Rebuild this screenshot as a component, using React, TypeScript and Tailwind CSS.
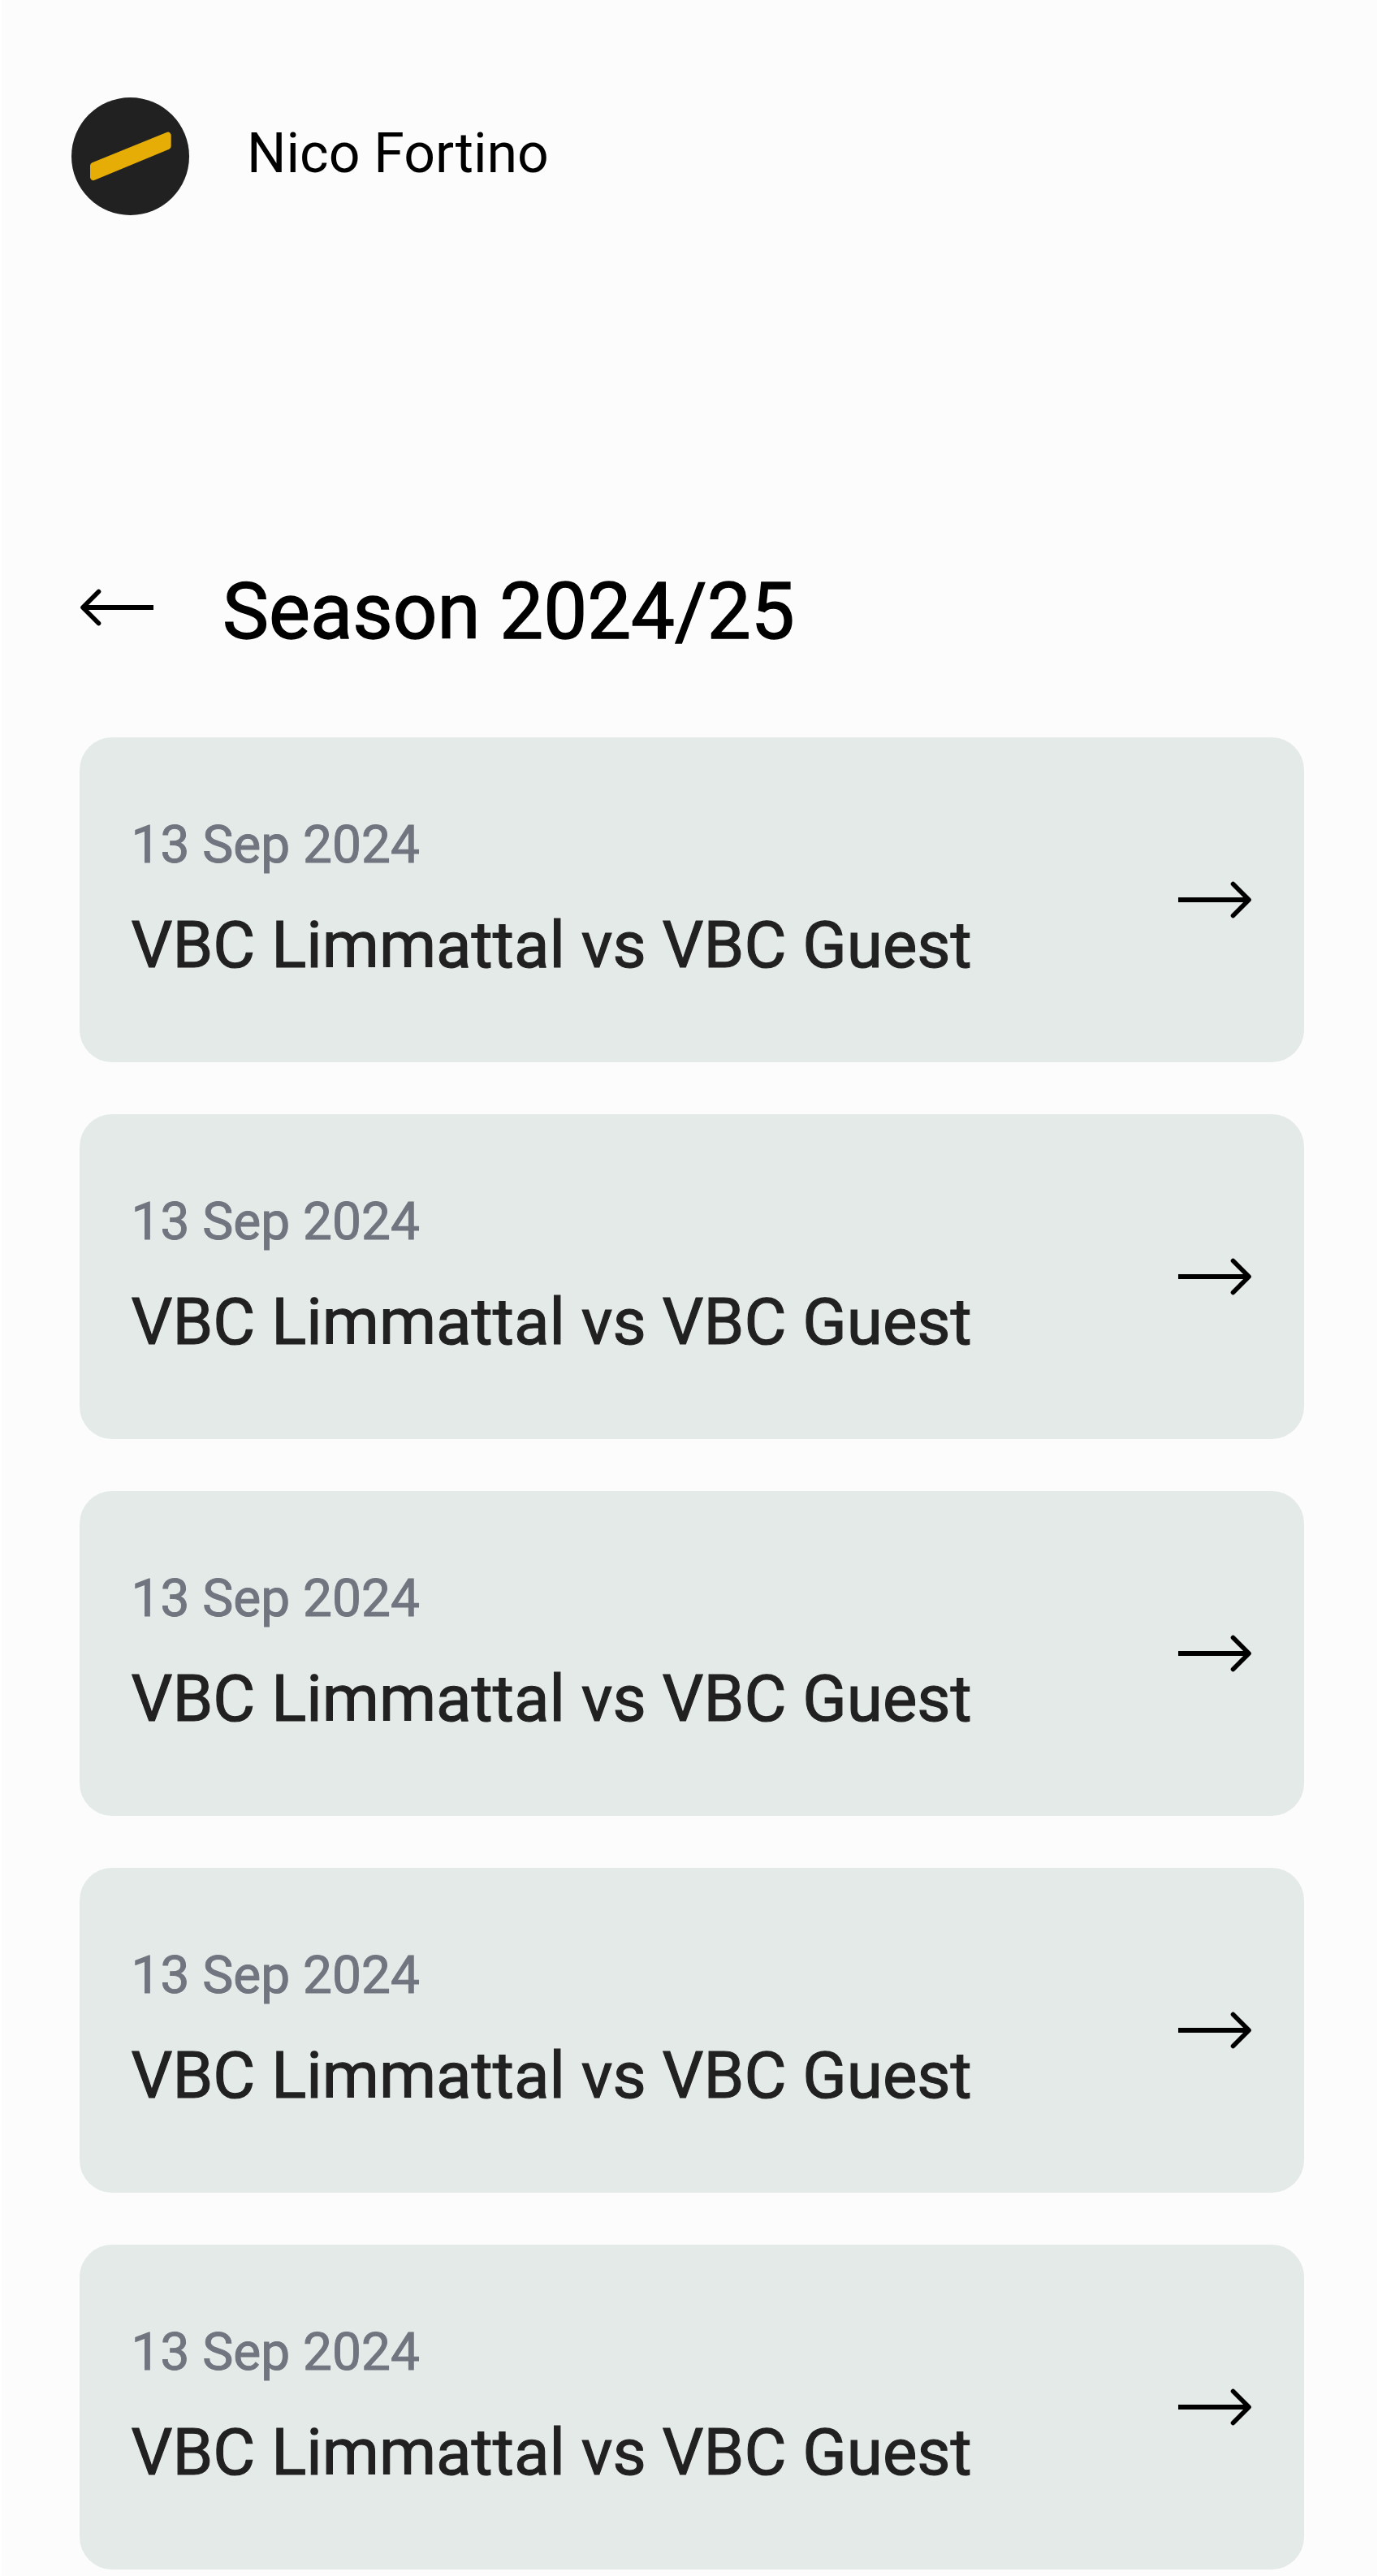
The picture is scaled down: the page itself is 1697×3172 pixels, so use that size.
import React from "react";

const games = Array.from({ length: 5 }, (_, i) => ({
  id: i,
  date: "13 Sep 2024",
  title: "VBC Limmattal vs VBC Guest",
}));

function Arrow({ className = "" }: { className?: string }) {
  return (
    <svg
      viewBox="0 0 92 48"
      className={`h-[48px] w-[92px] shrink-0 ${className}`}
      fill="none"
      stroke="#000"
      strokeWidth="6"
    >
      <path d="M1 24H87" />
      <path d="M68.5 4.5L88 24L68.5 43.5" strokeLinecap="round" strokeLinejoin="round" strokeWidth="5.6" />
    </svg>
  );
}

function Avatar() {
  return (
    <svg viewBox="0 0 145 145" className="size-[145px] shrink-0">
      <circle cx="72.5" cy="72.5" r="72.5" fill="#212121" />
      <path
        d="M27 84L118.7 46.7V60L27 98Z"
        fill="#e5ad06"
        stroke="#e5ad06"
        strokeWidth="8"
        strokeLinejoin="round"
      />
    </svg>
  );
}

export default function App() {
  return (
    <div className="h-[3172px] w-[1697px] overflow-hidden border-r border-l-2 border-white bg-[#fcfcfc] font-[Roboto,sans-serif]">
      <header className="mt-[120px] ml-[86px] flex h-[145px] items-center gap-[71px]">
        <Avatar />
        <span className="pb-[7px] text-[68px] leading-[80px] text-black">Nico Fortino</span>
      </header>
      <main className="mt-[432px] ml-24 w-[1508px]">
        <div className="flex items-center gap-[84px]">
          <Arrow className="mb-[10px] rotate-180" />
          <h1 className="text-[96px] leading-[112px] text-black [-webkit-text-stroke:1.4px_#000]">Season 2024/25</h1>
        </div>
        <ul className="mt-[99px] flex flex-col gap-16">
          {games.map((g) => (
            <li
              key={g.id}
              className="flex h-[400px] items-center justify-between rounded-[40px] bg-[#e4eae8] pr-16 pl-[63.5px]"
            >
              <div>
                <p className="text-[64px] leading-[80px] text-[#70757f] [-webkit-text-stroke:1px_#70757f]">{g.date}</p>
                <p className="mt-8 text-[80px] leading-[102px] text-[#212121] [-webkit-text-stroke:1.1px_#212121]">
                  {g.title}
                </p>
              </div>
              <Arrow />
            </li>
          ))}
        </ul>
      </main>
    </div>
  );
}
